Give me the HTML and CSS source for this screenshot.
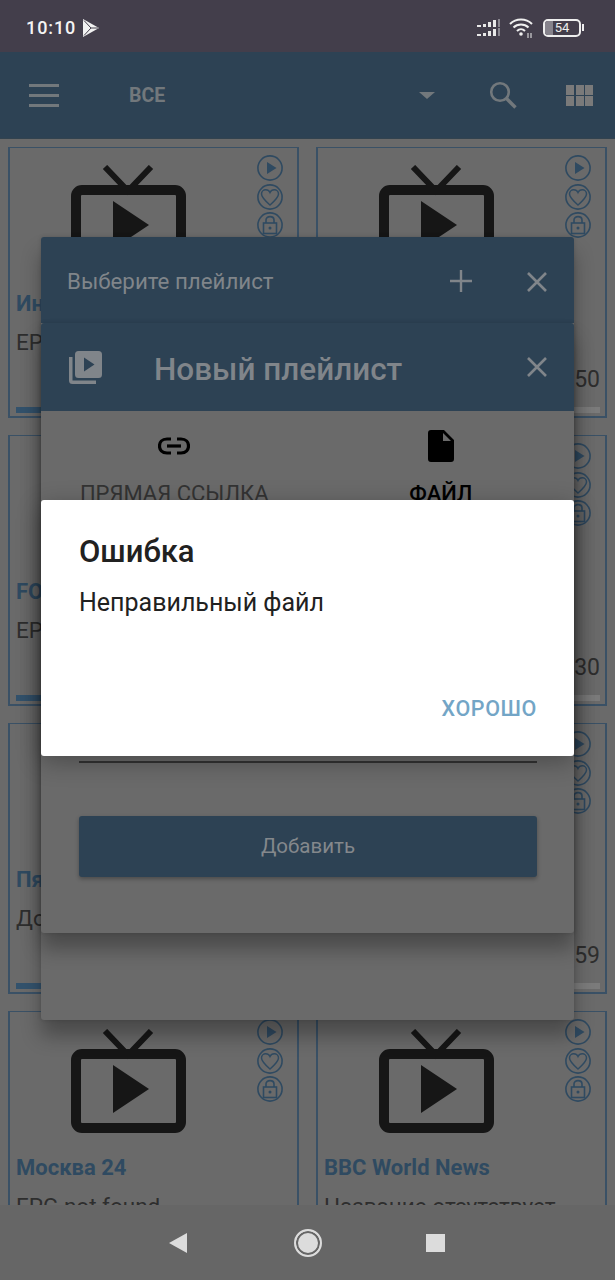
FILE: index.html
```html
<!DOCTYPE html>
<html lang="ru">
<head>
  <meta charset="UTF-8" />
  <title>Плейлист</title>
  <link rel="stylesheet" href="styles.css">
</head>
<body>
<svg class="defs" width="0" height="0">
  <symbol id="tv" viewBox="0 0 115 104">
    <path d="M34 2 L57 26 L80 2" fill="none" stroke="currentColor" stroke-width="6"/>
    <rect x="5" y="25" width="105" height="74" rx="6" fill="none" stroke="currentColor" stroke-width="10"/>
    <path d="M42 36 V84 L78 60 Z" fill="currentColor"/>
  </symbol>
  <symbol id="s-play" viewBox="0 0 26 26">
    <circle cx="13" cy="13" r="12.1" fill="none" stroke="currentColor" stroke-width="1.6"/>
    <path d="M10 7 V19 L19.5 13 Z" fill="currentColor"/>
  </symbol>
  <symbol id="s-heart" viewBox="0 0 26 26">
    <circle cx="13" cy="13" r="12.1" fill="none" stroke="currentColor" stroke-width="1.6"/>
    <path d="M13 21 C8 16.5 4.5 13.5 4.5 10 C4.5 7.5 6.5 5.8 8.7 5.8 C10.5 5.8 12.2 6.8 13 8.5 C13.8 6.8 15.5 5.8 17.3 5.8 C19.5 5.8 21.5 7.5 21.5 10 C21.5 13.5 18 16.5 13 21 Z" fill="none" stroke="currentColor" stroke-width="1.5"/>
  </symbol>
  <symbol id="s-lock" viewBox="0 0 26 26">
    <circle cx="13" cy="13" r="12.1" fill="none" stroke="currentColor" stroke-width="1.6"/>
    <rect x="6.5" y="11" width="13" height="10.5" fill="none" stroke="currentColor" stroke-width="1.6"/>
    <path d="M9 11 V8 C9 3.5 17 3.5 17 8 V11" fill="none" stroke="currentColor" stroke-width="1.6"/>
    <circle cx="13" cy="16" r="1.5" fill="currentColor"/>
  </symbol>
  <symbol id="close" viewBox="0 0 22 22">
    <path d="M2 2 L20 20 M20 2 L2 20" fill="none" stroke="currentColor" stroke-width="2.6"/>
  </symbol>
</svg>

<div class="screen">
  <div class="status">
    <div class="status-left">
      <span class="clock">10:10</span>
      <svg width="16" height="18" viewBox="0 0 16 18"><path d="M0 0 L16 9 L0 18 Z" fill="#f2f2f2"/><path d="M1 1.5 L8 9 L1 16.5 M8 9 H15" fill="none" stroke="#433e4b" stroke-width="1"/></svg>
    </div>
    <div class="status-right">
      <svg width="24" height="18" viewBox="0 0 24 18" fill="#e8e8e8">
        <rect x="0" y="6" width="4" height="2"/><rect x="6" y="5" width="3" height="3"/><rect x="11" y="3" width="3" height="5"/><rect x="16" y="1" width="3" height="7"/><rect x="21" y="0" width="2" height="8" fill="#8a8790"/>
        <rect x="0" y="15" width="4" height="2"/><rect x="6" y="14" width="3" height="3"/><rect x="11" y="12" width="3" height="5"/><rect x="16" y="10" width="3" height="7"/><rect x="21" y="9" width="2" height="8" fill="#8a8790"/>
      </svg>
      <svg width="25" height="20" viewBox="0 0 25 20" fill="none" stroke="#f0f0f0" stroke-width="2">
        <path d="M1 6 C7 0 17 0 23 6"/><path d="M4.5 9.5 C8.5 5.5 15.5 5.5 19.5 9.5"/><path d="M8 13 C10.5 10.5 13.5 10.5 16 13"/>
        <circle cx="12" cy="16" r="1.8" fill="#f0f0f0" stroke="none"/>
        <path d="M19 15 V20 M22 15 V20" stroke-width="1"/>
      </svg>
      <div class="battery"><span class="battery-fill"></span><span class="battery-num">54</span></div>
      <span class="battery-tip"></span>
    </div>
  </div>

  <div class="appbar">
    <div class="burger"><span></span><span></span><span></span></div>
    <span class="appbar-title">ВСЕ</span>
    <span class="caret"></span>
    <svg class="search" width="28" height="28" viewBox="0 0 28 28" fill="none" stroke="#72787c">
      <circle cx="11" cy="11" r="8.8" stroke-width="2.6"/>
      <path d="M17.5 17.5 L26.5 26.5" stroke-width="3.4"/>
    </svg>
    <div class="gridicon"><span></span><span></span><span></span><span></span><span></span><span></span></div>
  </div>

  <div class="channels">
    <div class="card">
      <div class="card-top">
        <svg class="tv"><use href="#tv"/></svg>
        <div class="card-actions"><svg><use href="#s-play"/></svg><svg><use href="#s-heart"/></svg><svg><use href="#s-lock"/></svg></div>
      </div>
      <div class="card-name">Интер</div>
      <div class="card-epg">EPG not found</div>
      <div class="card-time">&nbsp;</div>
      <div class="bar"><span class="bar-fill"></span></div>
    </div>
    <div class="card">
      <div class="card-top">
        <svg class="tv"><use href="#tv"/></svg>
        <div class="card-actions"><svg><use href="#s-play"/></svg><svg><use href="#s-heart"/></svg><svg><use href="#s-lock"/></svg></div>
      </div>
      <div class="card-name">Первый</div>
      <div class="card-epg">EPG not found</div>
      <div class="card-time">12:50</div>
      <div class="bar"><span class="bar-fill"></span></div>
    </div>
    <div class="card">
      <div class="card-top">
        <svg class="tv"><use href="#tv"/></svg>
        <div class="card-actions"><svg><use href="#s-play"/></svg><svg><use href="#s-heart"/></svg><svg><use href="#s-lock"/></svg></div>
      </div>
      <div class="card-name">FOX</div>
      <div class="card-epg">EPG not found</div>
      <div class="card-time">12:30</div>
      <div class="bar"><span class="bar-fill"></span></div>
    </div>
    <div class="card">
      <div class="card-top">
        <svg class="tv"><use href="#tv"/></svg>
        <div class="card-actions"><svg><use href="#s-play"/></svg><svg><use href="#s-heart"/></svg><svg><use href="#s-lock"/></svg></div>
      </div>
      <div class="card-name">Россия</div>
      <div class="card-epg">EPG not found</div>
      <div class="card-time">12:30</div>
      <div class="bar"><span class="bar-fill"></span></div>
    </div>
    <div class="card">
      <div class="card-top">
        <svg class="tv"><use href="#tv"/></svg>
        <div class="card-actions"><svg><use href="#s-play"/></svg><svg><use href="#s-heart"/></svg><svg><use href="#s-lock"/></svg></div>
      </div>
      <div class="card-name">Пятница</div>
      <div class="card-epg">Дом</div>
      <div class="card-time">12:59</div>
      <div class="bar"><span class="bar-fill"></span></div>
    </div>
    <div class="card">
      <div class="card-top">
        <svg class="tv"><use href="#tv"/></svg>
        <div class="card-actions"><svg><use href="#s-play"/></svg><svg><use href="#s-heart"/></svg><svg><use href="#s-lock"/></svg></div>
      </div>
      <div class="card-name">ТНТ</div>
      <div class="card-epg">Дом</div>
      <div class="card-time">12:59</div>
      <div class="bar"><span class="bar-fill"></span></div>
    </div>
    <div class="card">
      <div class="card-top">
        <svg class="tv"><use href="#tv"/></svg>
        <div class="card-actions"><svg><use href="#s-play"/></svg><svg><use href="#s-heart"/></svg><svg><use href="#s-lock"/></svg></div>
      </div>
      <div class="card-name">Москва 24</div>
      <div class="card-epg">EPG not found</div>
    </div>
    <div class="card">
      <div class="card-top">
        <svg class="tv"><use href="#tv"/></svg>
        <div class="card-actions"><svg><use href="#s-play"/></svg><svg><use href="#s-heart"/></svg><svg><use href="#s-lock"/></svg></div>
      </div>
      <div class="card-name">BBC World News</div>
      <div class="card-epg">Название отсутствует</div>
    </div>
  </div>

  <div class="navbar">
    <span class="nav-back"></span>
    <span class="nav-home"></span>
    <span class="nav-stop"></span>
  </div>

  <!-- dialogs stacked over the list -->
  <div class="dialog dialog-pick">
    <div class="dlg-head">
      <span class="pick-title">Выберите плейлист</span>
      <svg class="plus" width="24" height="24" viewBox="0 0 24 24"><path d="M12 1 V23 M1 12 H23" fill="none" stroke="currentColor" stroke-width="2.4"/></svg>
      <svg class="close" width="22" height="22"><use href="#close"/></svg>
    </div>
  </div>

  <div class="dialog dialog-new">
    <div class="dlg-head">
      <svg class="new-icon" width="33" height="33" viewBox="0 0 33 33" fill="currentColor">
        <path d="M0 6 H3.5 V29.5 H27 V33 H3.5 Q0 33 0 29.5 Z"/>
        <path fill-rule="evenodd" d="M9.5 0 H29.5 Q33 0 33 3.5 V23.5 Q33 27 29.5 27 H9.5 Q6 27 6 23.5 V3.5 Q6 0 9.5 0 Z M15 6.5 V20.5 L25.5 13.5 Z"/>
      </svg>
      <span class="new-title">Новый плейлист</span>
      <svg class="close" width="22" height="22"><use href="#close"/></svg>
    </div>
    <div class="tabs">
      <div class="tab">
        <svg width="32" height="18" viewBox="0 0 32 18" fill="none" stroke="#000" stroke-width="3.2">
          <path d="M13 2 H9 C-1 2 -1 16 9 16 H13"/><path d="M19 2 H23 C33 2 33 16 23 16 H19"/><path d="M9 9 H23"/>
        </svg>
        <span>ПРЯМАЯ ССЫЛКА</span>
      </div>
      <div class="tab tab-on">
        <svg width="26" height="32" viewBox="0 0 26 32"><path fill-rule="evenodd" d="M3 0 H16 L26 10 V29 Q26 32 23 32 H3 Q0 32 0 29 V3 Q0 0 3 0 Z M15 3 V11 H23 Z" fill="#000"/></svg>
        <span>ФАЙЛ</span>
      </div>
    </div>
    <div class="form">
      <div class="field-line"></div>
      <div class="add-btn">Добавить</div>
    </div>
  </div>

  <div class="alert">
    <div class="alert-title">Ошибка</div>
    <div class="alert-msg">Неправильный файл</div>
    <div class="alert-ok">ХОРОШО</div>
  </div>
</div>
</body>
</html>
```

FILE: styles.css
```css
* {box-sizing: border-box}
html, body {margin: 0; padding: 0}
body {font-family: Roboto, "Noto Sans", sans-serif; background: #6a6a6a}
.defs {display: block; height: 0}
.screen {position: relative; width: 615px; height: 1280px; overflow: hidden; display: flex; flex-direction: column; background: #6a6a6a}

/* status bar */
.status {height: 52px; flex: none; background: #433e4b; display: flex; align-items: center; justify-content: space-between; padding: 3px 0 0 26px}
.status-left {display: flex; align-items: center; gap: 7px}
.clock {color: #f4f4f4; font-size: 18px; font-weight: 500; letter-spacing: .9px}
.status-right {display: flex; align-items: center; padding-right: 31px}
.status-right svg:first-child {margin-right: 8px}
.battery {position: relative; width: 38px; height: 18px; margin-left: 9px; border: 2px solid #eee; border-radius: 5px; overflow: hidden}
.battery-fill {display: block; width: 8px; height: 100%; background: #86838c}
.battery-num {position: absolute; left: 0; right: 0; top: -2px; text-align: center; color: #eee; font-size: 13px; line-height: 18px}
.battery-tip {width: 2px; height: 7px; margin-left: 1px; background: #eee}

/* app bar */
.appbar {height: 87px; flex: none; background: #2d4254; display: flex; align-items: center; border-bottom: 1px solid #33434f}
.burger {width: 30px; margin-left: 29px; display: flex; flex-direction: column; gap: 7px}
.burger span {height: 3px; background: #72787c}
.appbar-title {margin-left: 70px; width: 290px; font-size: 19.5px; font-weight: 700; color: #72787c}
.caret {width: 0; height: 0; border-left: 8px solid transparent; border-right: 8px solid transparent; border-top: 7px solid #72787c}
.search {margin-left: 54px}
.gridicon {margin-left: 49px; width: 27px; height: 21px; display: grid; grid-template-columns: repeat(3, 8px); grid-auto-rows: 10px; gap: 1px 1.5px}
.gridicon span {background: #7a7a7a}

/* channel grid */
.channels {flex: 1; min-height: 0; overflow: hidden; padding: 8px 8px 0; display: grid; grid-template-columns: 291px 291px; grid-auto-rows: 271px; gap: 17px}
.card {border: 2px solid #3a5166; border-top-width: 1px; padding: 0 5px 0 6px}
.card-top {position: relative; height: 135px}
.tv {position: absolute; left: 55px; top: 17px; width: 115px; height: 104px; color: #161616}
.card-actions {position: absolute; right: 9px; top: 7px; display: flex; flex-direction: column; gap: 2.5px; color: #2f4a61}
.card-actions svg {display: block; width: 26px; height: 26px}
.card-name {margin-top: 8px; font-size: 22px; line-height: 26px; font-weight: 700; color: #2f4a61; white-space: nowrap}
.card-epg {margin-top: 12px; font-size: 22.5px; line-height: 26px; color: #2e2e2e; white-space: nowrap}
.card-time {margin-top: 12px; font-size: 23px; line-height: 26px; color: #2e2e2e; text-align: right}
.bar {margin-top: 14px; height: 6px; background: #7b7b7b}
.bar-fill {display: block; width: 30%; height: 100%; background: #33526c}

/* bottom nav */
.navbar {height: 75px; flex: none; background: #666; display: flex; align-items: center; gap: 107px; padding-left: 169px}
.nav-back {width: 0; height: 0; border-top: 10px solid transparent; border-bottom: 10px solid transparent; border-right: 18px solid #dcdcdc}
.nav-home {width: 28px; height: 28px; border-radius: 50%; background: #dcdcdc; border: 2px solid #dcdcdc; box-shadow: inset 0 0 0 2px #666}
.nav-stop {width: 19px; height: 18px; margin-left: -3px; background: #dcdcdc}

/* dialogs */
.dialog {position: absolute; left: 41px; width: 533px; background: #6a6a6a; border-radius: 3px; box-shadow: 0 16px 20px rgba(0,0,0,.3), 0 0 4px rgba(0,0,0,.15)}
.dialog-pick {top: 237px; height: 783px}
.dialog-new {top: 323px; height: 610px}
.dlg-head {position: relative; height: 88px; background: #2d4254; display: flex; align-items: center; color: #80858a; border-radius: 3px 3px 0 0}
.dialog-pick .dlg-head {height: 86px}
.pick-title {margin-left: 26px; padding-top: 2px; font-size: 22.3px}
.plus {position: absolute; left: 408px; top: 32px}
.close {position: absolute; left: 485px; top: 34px}
.new-icon {margin-left: 28px}
.new-title {margin-left: 52px; padding-top: 4px; font-size: 31.5px; font-weight: 500}
.dialog-new .close {top: 33px}

.tabs {display: flex; height: 100px; color: #333}
.tab {flex: 1; display: flex; flex-direction: column; align-items: center; padding-top: 19px; font-size: 22px}
.tab svg {height: 32px; margin-bottom: 19px}
.tab span {line-height: 26px}
.tab-on {color: #000; font-weight: 500}
.form {padding: 0 37px 0 38px}
.field-line {margin-top: 250px; height: 2px; background: #333}
.add-btn {margin-top: 53px; height: 61px; background: #2d4254; border-radius: 3px; color: #84888c; font-size: 20.5px; line-height: 61px; text-align: center; box-shadow: 0 2px 4px rgba(0,0,0,.3)}

.alert {position: absolute; left: 41px; top: 500px; width: 533px; height: 256px; background: #fff; border-radius: 3px; padding: 35px 37px 0 38px; color: #212121; box-shadow: 0 6px 24px rgba(0,0,0,.3)}
.alert-title {font-size: 31px; line-height: 34px; font-weight: 500}
.alert-msg {margin-top: 19px; font-size: 25px; line-height: 30px}
.alert-ok {margin-top: 78px; text-align: right; font-size: 21.5px; line-height: 26px; font-weight: 500; color: #73a5c6; letter-spacing: .6px}
```
